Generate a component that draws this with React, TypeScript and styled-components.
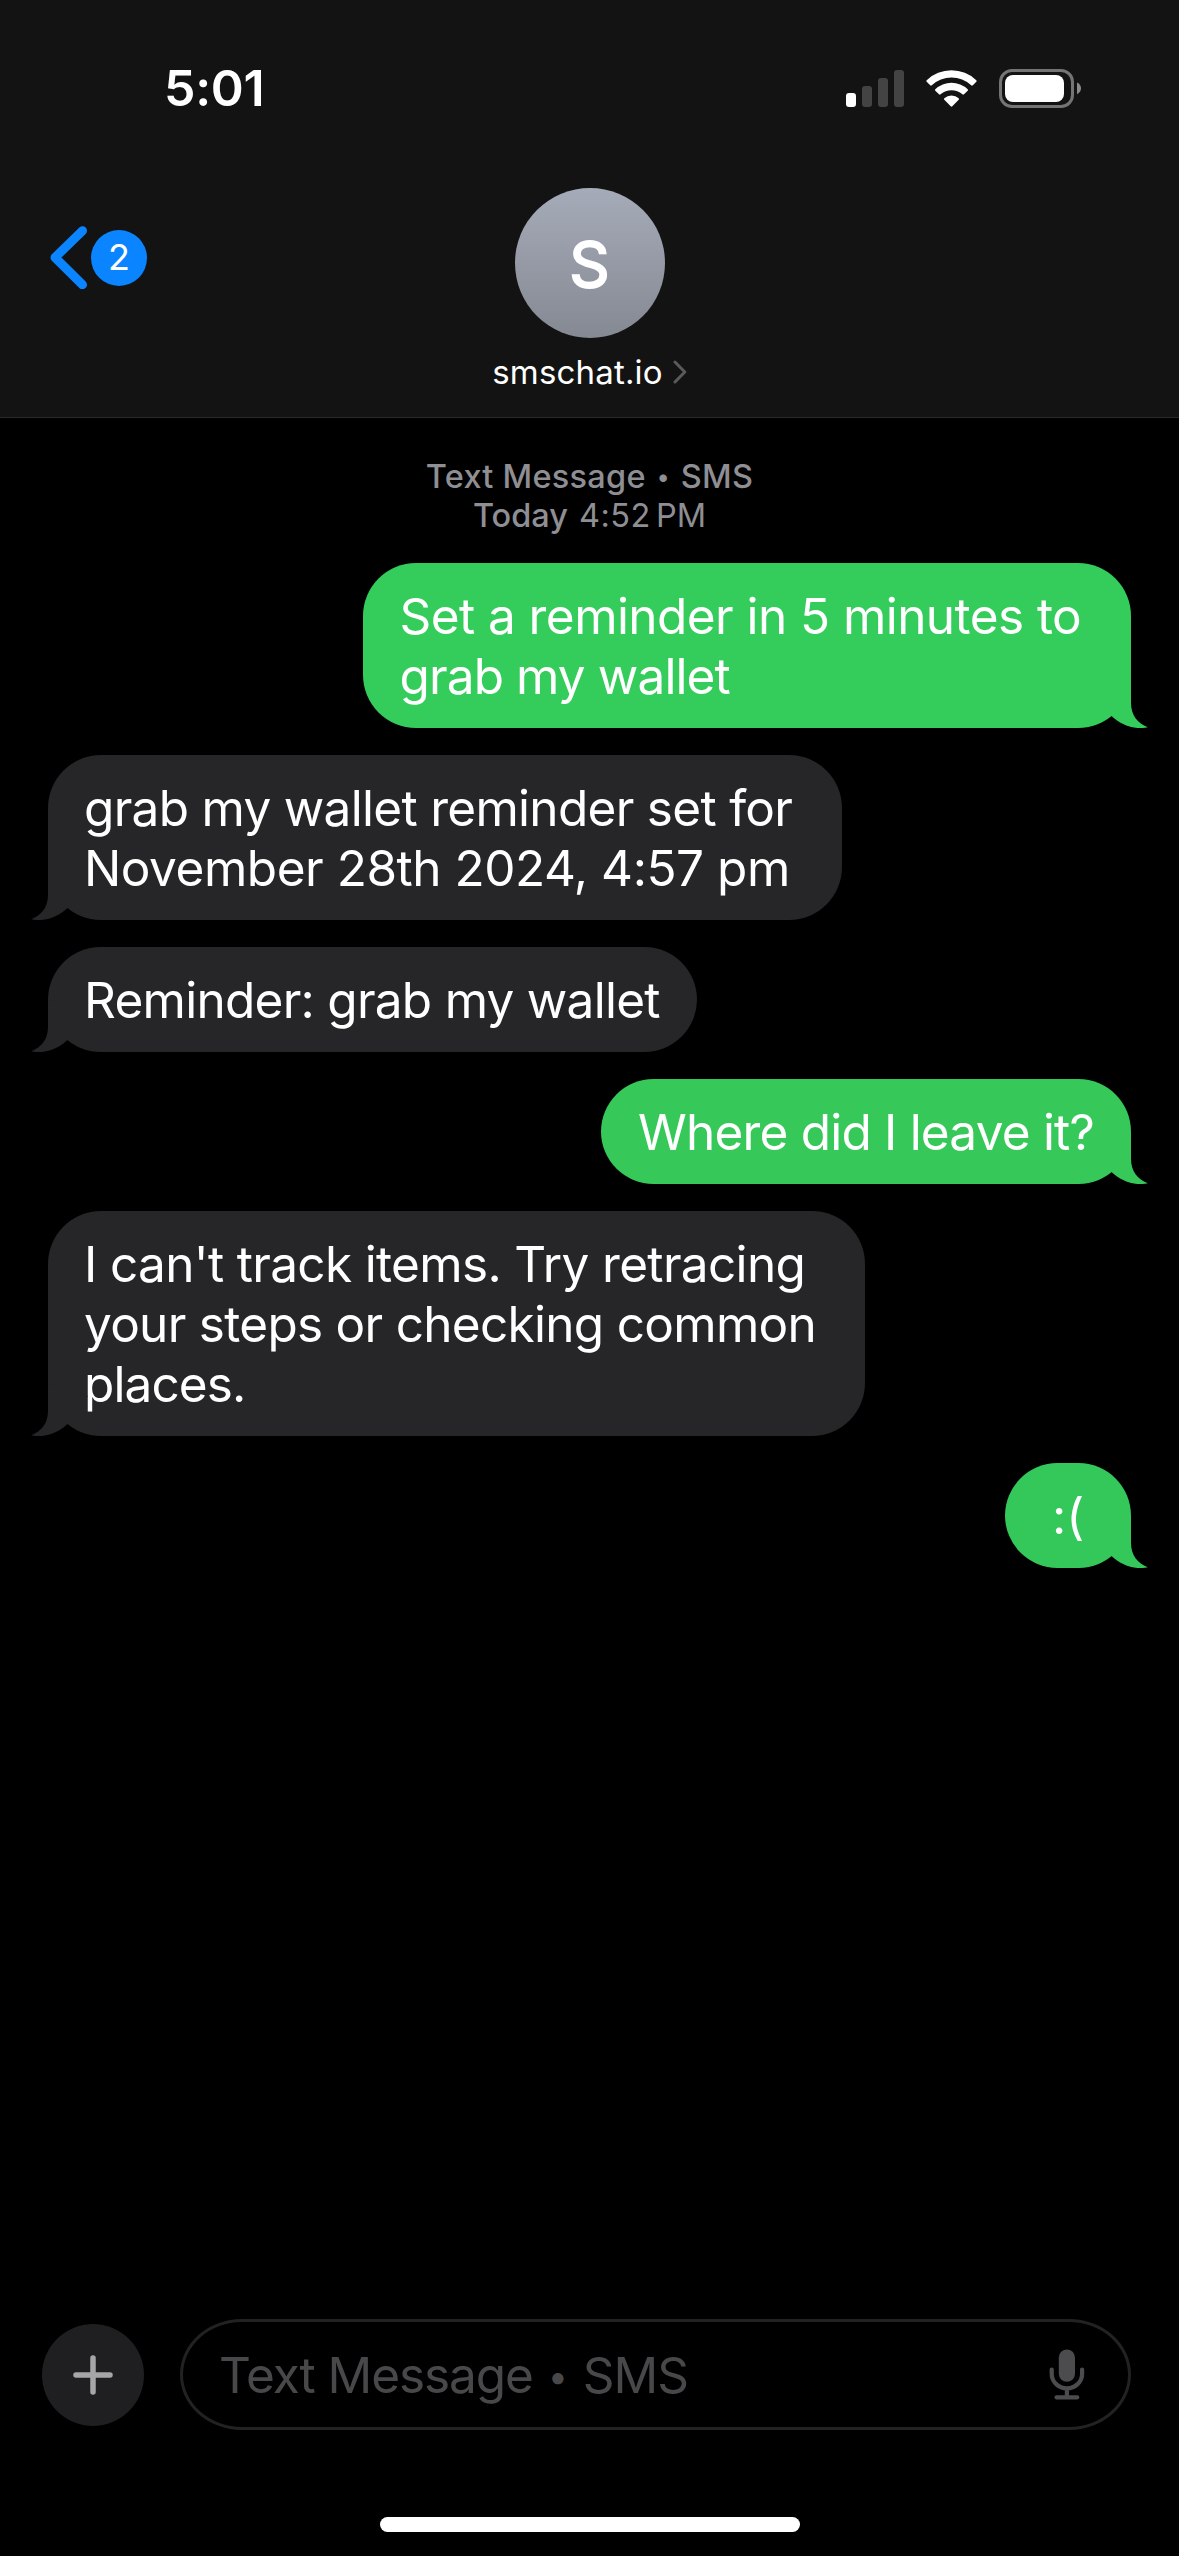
import React from "react";
import styled, { createGlobalStyle, css } from "styled-components";

const GlobalStyle = createGlobalStyle`
  * {
    box-sizing: border-box;
  }
  body {
    margin: 0;
    background: #000;
  }
`;

const Screen = styled.div`
  display: flex;
  flex-direction: column;
  width: 1179px;
  height: 2556px;
  overflow: hidden;
  background: #000;
  color: #fff;
  font-family: Inter, "Liberation Sans", sans-serif;
`;

/* ---------- header ---------- */

const Header = styled.header`
  display: flex;
  flex-direction: column;
  height: 418px;
  background: #131313;
  border-bottom: 1px solid #2a2a2b;
`;

const StatusBar = styled.div`
  display: flex;
  align-items: center;
  justify-content: space-between;
  height: 188px;
  padding: 0 98px 12px 164px;
`;

const Clock = styled.time`
  font-size: 50px;
  font-weight: 600;
  line-height: 60px;
  letter-spacing: -0.3px;
`;

const StatusIcons = styled.div`
  display: flex;
  align-items: center;
  gap: 22px;
`;

const StatusIcon = styled.svg`
  display: block;
  flex: none;
`;

const NavRow = styled.div`
  display: grid;
  grid-template-columns: 1fr auto 1fr;
  padding: 0 49px;
`;

const BackButton = styled.button`
  display: flex;
  align-items: center;
  gap: 3px;
  height: 63px;
  margin-top: 38px;
  padding: 0;
  border: 0;
  background: none;
  color: #fff;
  font: inherit;
`;

const UnreadCount = styled.span`
  width: 56px;
  height: 56px;
  border-radius: 50%;
  background: #0a84ff;
  font-size: 36px;
  line-height: 55px;
  text-align: center;
`;

const Contact = styled.div`
  display: flex;
  flex-direction: column;
  align-items: center;
  gap: 14px;
`;

const Avatar = styled.div`
  width: 150px;
  height: 150px;
  border-radius: 50%;
  background: linear-gradient(#a6abb9, #858992);
  font-size: 63px;
  font-weight: 400;
  line-height: 153px;
  text-align: center;
  -webkit-text-stroke: 2px #fff;
  stroke-linejoin: round;
`;

const ContactName = styled.div`
  display: flex;
  align-items: center;
  gap: 10px;
  font-size: 33px;
  line-height: 40px;
  letter-spacing: 0.18px;
`;

/* ---------- conversation ---------- */

const Conversation = styled.main`
  display: flex;
  flex: 1;
  flex-direction: column;
  gap: 27px;
  padding: 39px 48px 0;
`;

const Stamp = styled.div`
  display: flex;
  flex-direction: column;
  align-items: center;
  margin-bottom: 1px;
  color: #8e8e93;
  font-size: 32.5px;
  font-weight: 500;
  line-height: 39px;
`;

const StampLine = styled.div<{ $tracking?: number }>`
  display: flex;
  white-space: nowrap;
  letter-spacing: ${(p) => p.$tracking ?? 0}px;
`;

const StampTime = styled.span<{ $gap: number; $tracking?: number }>`
  margin-left: ${(p) => p.$gap}px;
  font-weight: 400;
  letter-spacing: ${(p) => p.$tracking ?? 0}px;
`;

const Dot = styled.span<{ $size: number; $width: number; $drop?: number }>`
  width: ${(p) => p.$width}px;
  padding-top: ${(p) => p.$drop ?? 0}px;
  font-size: ${(p) => p.$size}px;
  letter-spacing: 0;
  text-align: center;
`;

type Side = "sent" | "received";

const Bubble = styled.div<{ $side: Side; $width: number; $fill: string; $inset: number }>`
  position: relative;
  align-self: ${(p) => (p.$side === "sent" ? "flex-end" : "flex-start")};
  width: ${(p) => p.$width}px;
  padding: 23px 0 22px ${(p) => p.$inset}px;
  border-radius: 53px;
  background: ${(p) => p.$fill};
  color: ${(p) => p.$fill};
`;

const Line = styled.div<{ $tracking: number }>`
  color: #fff;
  font-size: 49.5px;
  line-height: 60px;
  letter-spacing: ${(p) => p.$tracking}px;
  white-space: nowrap;
`;

const TailShape = styled.svg<{ $side: Side }>`
  position: absolute;
  bottom: 0;
  width: 57px;
  height: 53px;
  ${(p) =>
    p.$side === "sent"
      ? css`
          right: -17px;
        `
      : css`
          left: -17px;
          transform: scaleX(-1);
        `}
`;

const Tail = ({ side }: { side: Side }) => (
  <TailShape $side={side} viewBox="-40 -53 57 53" fill="currentColor">
    <path d="M0-52V-25C0-13 6.500-4.500 16.800-0.800C13 0 10 0 6.500 0C-3-0.800-12-5-19.500-12L-40-40Z" />
  </TailShape>
);

interface Message {
  side: Side;
  width: number;
  fill: string;
  inset: number;
  lines: [string, number][];
}

const GREY = "#262628";

const messages: Message[] = [
  {
    side: "sent",
    width: 768,
    fill: "#34cd5b",
    inset: 36.5,
    lines: [
      ["Set a reminder in 5 minutes to", -0.56],
      ["grab my wallet", -0.88],
    ],
  },
  {
    side: "received",
    width: 794,
    fill: GREY,
    inset: 36,
    lines: [
      ["grab my wallet reminder set for", -0.7],
      ["November 28th 2024, 4:57 pm", -0.46],
    ],
  },
  {
    side: "received",
    width: 649,
    fill: GREY,
    inset: 36,
    lines: [["Reminder: grab my wallet", -0.73]],
  },
  {
    side: "sent",
    width: 530,
    fill: "#36c95a",
    inset: 37,
    lines: [["Where did I leave it?", -0.8]],
  },
  {
    side: "received",
    width: 817,
    fill: GREY,
    inset: 36,
    lines: [
      ["I can't track items. Try retracing", -0.66],
      ["your steps or checking common", -0.71],
      ["places.", -0.9],
    ],
  },
  {
    side: "sent",
    width: 126,
    fill: "#34c759",
    inset: 47,
    lines: [[":(", 0]],
  },
];

/* ---------- composer ---------- */

const Composer = styled.footer`
  display: flex;
  align-items: center;
  gap: 36px;
  height: 111px;
  margin-bottom: 87px;
  padding: 0 48px 0 42px;
`;

const AddButton = styled.button`
  display: grid;
  place-items: center;
  width: 102px;
  height: 102px;
  padding: 0;
  border: 0;
  border-radius: 50%;
  background: #1f1f21;
`;

const Field = styled.div`
  display: flex;
  flex: 1;
  align-items: center;
  justify-content: space-between;
  height: 111px;
  padding: 0 43px 0 36px;
  border: 3px solid #222223;
  border-radius: 62px / 55.5px;
  color: #48484a;
`;

const Placeholder = styled.span`
  display: flex;
  height: 60px;
  font-size: 49.5px;
  line-height: 60px;
  letter-spacing: -1.08px;
  white-space: nowrap;
`;

const HomeIndicator = styled.div`
  align-self: center;
  width: 420px;
  height: 15px;
  margin-bottom: 24px;
  border-radius: 8px;
  background: #fff;
`;

export default function App() {
  return (
    <>
      <GlobalStyle />
      <Screen>
        <Header>
          <StatusBar>
            <Clock>5:01</Clock>
            <StatusIcons>
              <StatusIcon width="58" height="39" viewBox="846 68 58 39">
                <rect x="846" y="92" width="10" height="14" rx="3" fill="#fff" />
                <rect x="862" y="85" width="10" height="21" rx="3" fill="#434343" />
                <rect x="878" y="77" width="10" height="29" rx="3" fill="#434343" />
                <rect x="894" y="69" width="10" height="37" rx="3" fill="#434343" />
              </StatusIcon>
              <StatusIcon width="51" height="39" viewBox="926 68 51 39" fill="#fff">
                <path d="M926.700 79.200Q926 80 926.700 80.800L930.200 84.300Q931 85 931.800 84.300A29 29 0 0 1 971.200 84.300Q972 85 972.800 84.300L976.300 80.800Q977 80 976.300 79.200A36 36 0 0 0 926.700 79.200Z" />
                <path d="M935.300 88.200Q934.600 89 935.300 89.700L939 93.300Q939.800 94 940.600 93.300A16.500 16.500 0 0 1 962.400 93.300Q963.200 94 964 93.300L967.700 89.700Q968.400 89 967.700 88.200A23.600 23.600 0 0 0 935.300 88.200Z" />
                <path d="M944.300 97.200Q943.600 98 944.300 98.800L950.700 105.300Q951.500 106.100 952.300 105.300L958.700 98.800Q959.400 98 958.700 97.200A11 11 0 0 0 944.300 97.200Z" />
              </StatusIcon>
              <StatusIcon width="82" height="39" viewBox="999 68 82 39">
                <rect x="1000.500" y="69.500" width="72" height="36" rx="11.500" fill="none" stroke="#747474" strokeWidth="3" />
                <rect x="1005" y="74" width="59" height="27" rx="8" fill="#fff" />
                <path d="M1077 81.500Q1081 83.500 1081 87.300Q1081 91.200 1077 93.300Z" fill="#8a8a8a" />
              </StatusIcon>
            </StatusIcons>
          </StatusBar>
          <NavRow>
            <BackButton>
              <StatusIcon width="39" height="63" viewBox="49 226 39 63">
                <path d="M82.500 230.700L55 257.500L82.500 284.700" fill="none" stroke="#0a84ff" strokeWidth="9" strokeLinecap="round" strokeLinejoin="round" />
              </StatusIcon>
              <UnreadCount>2</UnreadCount>
            </BackButton>
            <Contact>
              <Avatar>S</Avatar>
              <ContactName>
                smschat.io
                <StatusIcon width="14" height="24" viewBox="0 0 14 24">
                  <path d="M2 2L11.800 12L2 22" fill="none" stroke="#5a5a5c" strokeWidth="3" strokeLinecap="round" strokeLinejoin="round" />
                </StatusIcon>
              </ContactName>
            </Contact>
          </NavRow>
        </Header>

        <Conversation>
          <Stamp>
            <StampLine $tracking={0.25}>
              Text Message
              <Dot $size={24} $width={35}>•</Dot>
              SMS
            </StampLine>
            <StampLine>
              Today
              <StampTime $gap={11} $tracking={0.5}>4:52</StampTime>
              <StampTime $gap={5}>PM</StampTime>
            </StampLine>
          </Stamp>
          {messages.map((message, i) => (
            <Bubble key={i} $side={message.side} $width={message.width} $fill={message.fill} $inset={message.inset}>
              <Tail side={message.side} />
              {message.lines.map(([text, tracking]) => (
                <Line key={text} $tracking={tracking}>
                  {text}
                </Line>
              ))}
            </Bubble>
          ))}
        </Conversation>

        <Composer>
          <AddButton>
            <StatusIcon width="40" height="40" viewBox="0 0 40 40">
              <path d="M20 3V37M3 20H37" stroke="#a6a6a8" strokeWidth="5.500" strokeLinecap="round" />
            </StatusIcon>
          </AddButton>
          <Field>
            <Placeholder>
              Text Message
              <Dot $size={36} $width={50} $drop={1}>•</Dot>
              SMS
            </Placeholder>
            <StatusIcon width="36" height="51" viewBox="1049.500 2349.500 36 51">
              <rect x="1059.300" y="2350" width="16.200" height="32.300" rx="8.100" fill="#4c4c4e" />
              <path d="M1052.200 2370V2374.500A15.200 14.300 0 0 0 1082.600 2374.500V2370M1067.400 2389V2397.800M1057 2397.800H1077.800" fill="none" stroke="#4c4c4e" strokeWidth="4.200" strokeLinecap="round" />
            </StatusIcon>
          </Field>
        </Composer>
        <HomeIndicator />
      </Screen>
    </>
  );
}
